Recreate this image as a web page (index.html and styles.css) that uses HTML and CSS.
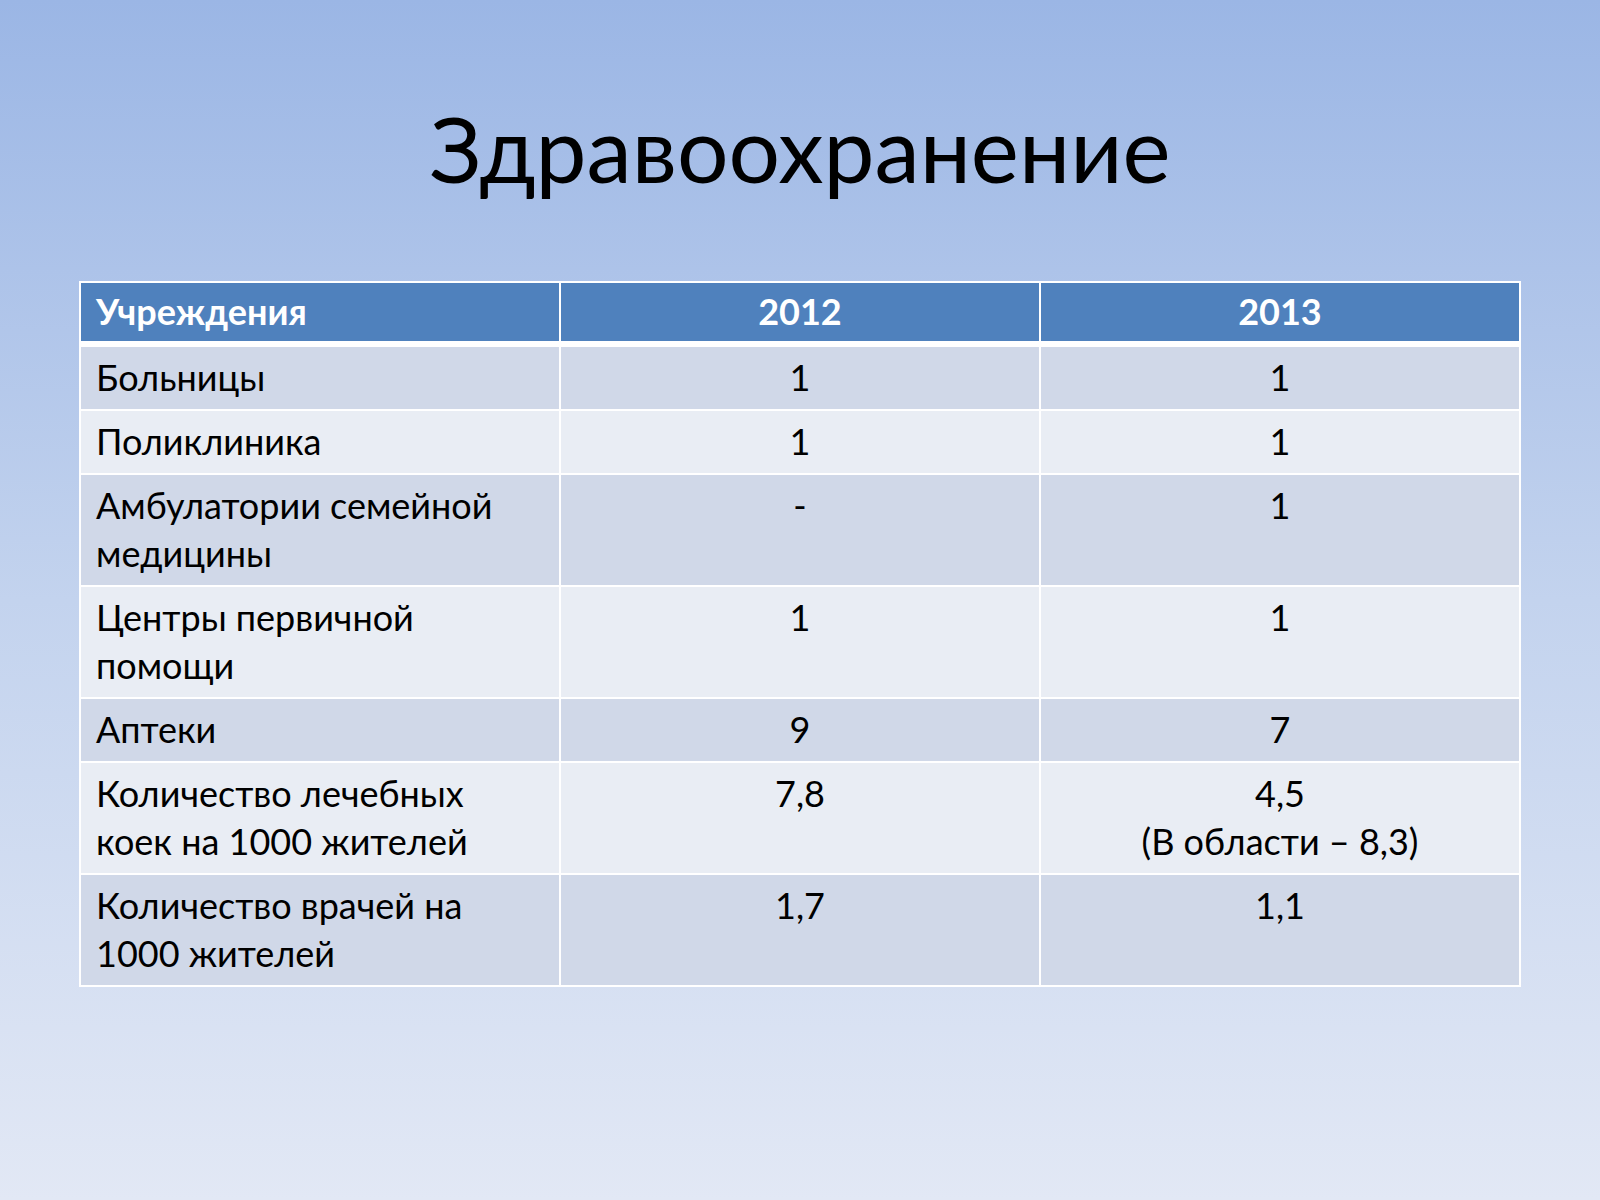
FILE: index.html
```html
<!DOCTYPE html>
<html lang="ru">
<head>
<meta charset="utf-8">
<title>Здравоохранение</title>
<link rel="stylesheet" href="styles.css">
</head>
<body>
<div class="slide">
  <h1 class="title">Здравоохранение</h1>
  <table class="data">
    <colgroup><col class="c1"><col class="c2"><col class="c3"></colgroup>
    <thead>
      <tr><th class="name">Учреждения</th><th>2012</th><th>2013</th></tr>
    </thead>
    <tbody>
      <tr class="odd"><td class="name">Больницы</td><td>1</td><td>1</td></tr>
      <tr class="even"><td class="name">Поликлиника</td><td>1</td><td>1</td></tr>
      <tr class="odd"><td class="name">Амбулатории семейной медицины</td><td>-</td><td>1</td></tr>
      <tr class="even"><td class="name">Центры первичной помощи</td><td>1</td><td>1</td></tr>
      <tr class="odd"><td class="name">Аптеки</td><td>9</td><td>7</td></tr>
      <tr class="even"><td class="name">Количество лечебных коек на 1000 жителей</td><td>7,8</td><td>4,5<br>(В области – 8,3)</td></tr>
      <tr class="odd"><td class="name">Количество врачей на 1000 жителей</td><td>1,7</td><td>1,1</td></tr>
    </tbody>
  </table>
</div>
</body>
</html>
```
FILE: styles.css
```css
html, body {
  margin: 0;
  padding: 0;
}
body {
  width: 1600px;
  height: 1200px;
  overflow: hidden;
}
.slide {
  width: 1600px;
  height: 1200px;
  box-sizing: border-box;
  padding-top: 93px;
  background: linear-gradient(to bottom, #9bb6e5 0%, #c3d3ee 50%, #e2e8f5 100%);
  font-family: "Lato", "Open Sans", "Noto Sans", sans-serif;
  color: #000;
}
.title {
  margin: 0;
  font-weight: 400;
  font-size: 91px;
  line-height: 1.2;
  text-align: center;
  height: 110px;
}
.data {
  margin: 78px 0 0 79px;
  width: 1441px;
  border-collapse: collapse;
  table-layout: fixed;
  font-size: 36px;
  line-height: 48px;
}
.data col { width: 480px; }
.data th, .data td {
  border: 2px solid #fff;
  padding: 6px 15px 8px;
  text-align: center;
  vertical-align: top;
}
.data .name { text-align: left; }
.data th {
  background: #4f81bd;
  color: #fff;
  font-weight: 700;
  border-bottom: 6px solid #fff;
  padding-top: 4px;
  padding-bottom: 6px;
}
.data tr.odd td { background: #d0d8e8; }
.data tr.even td { background: #e9edf4; }
```
